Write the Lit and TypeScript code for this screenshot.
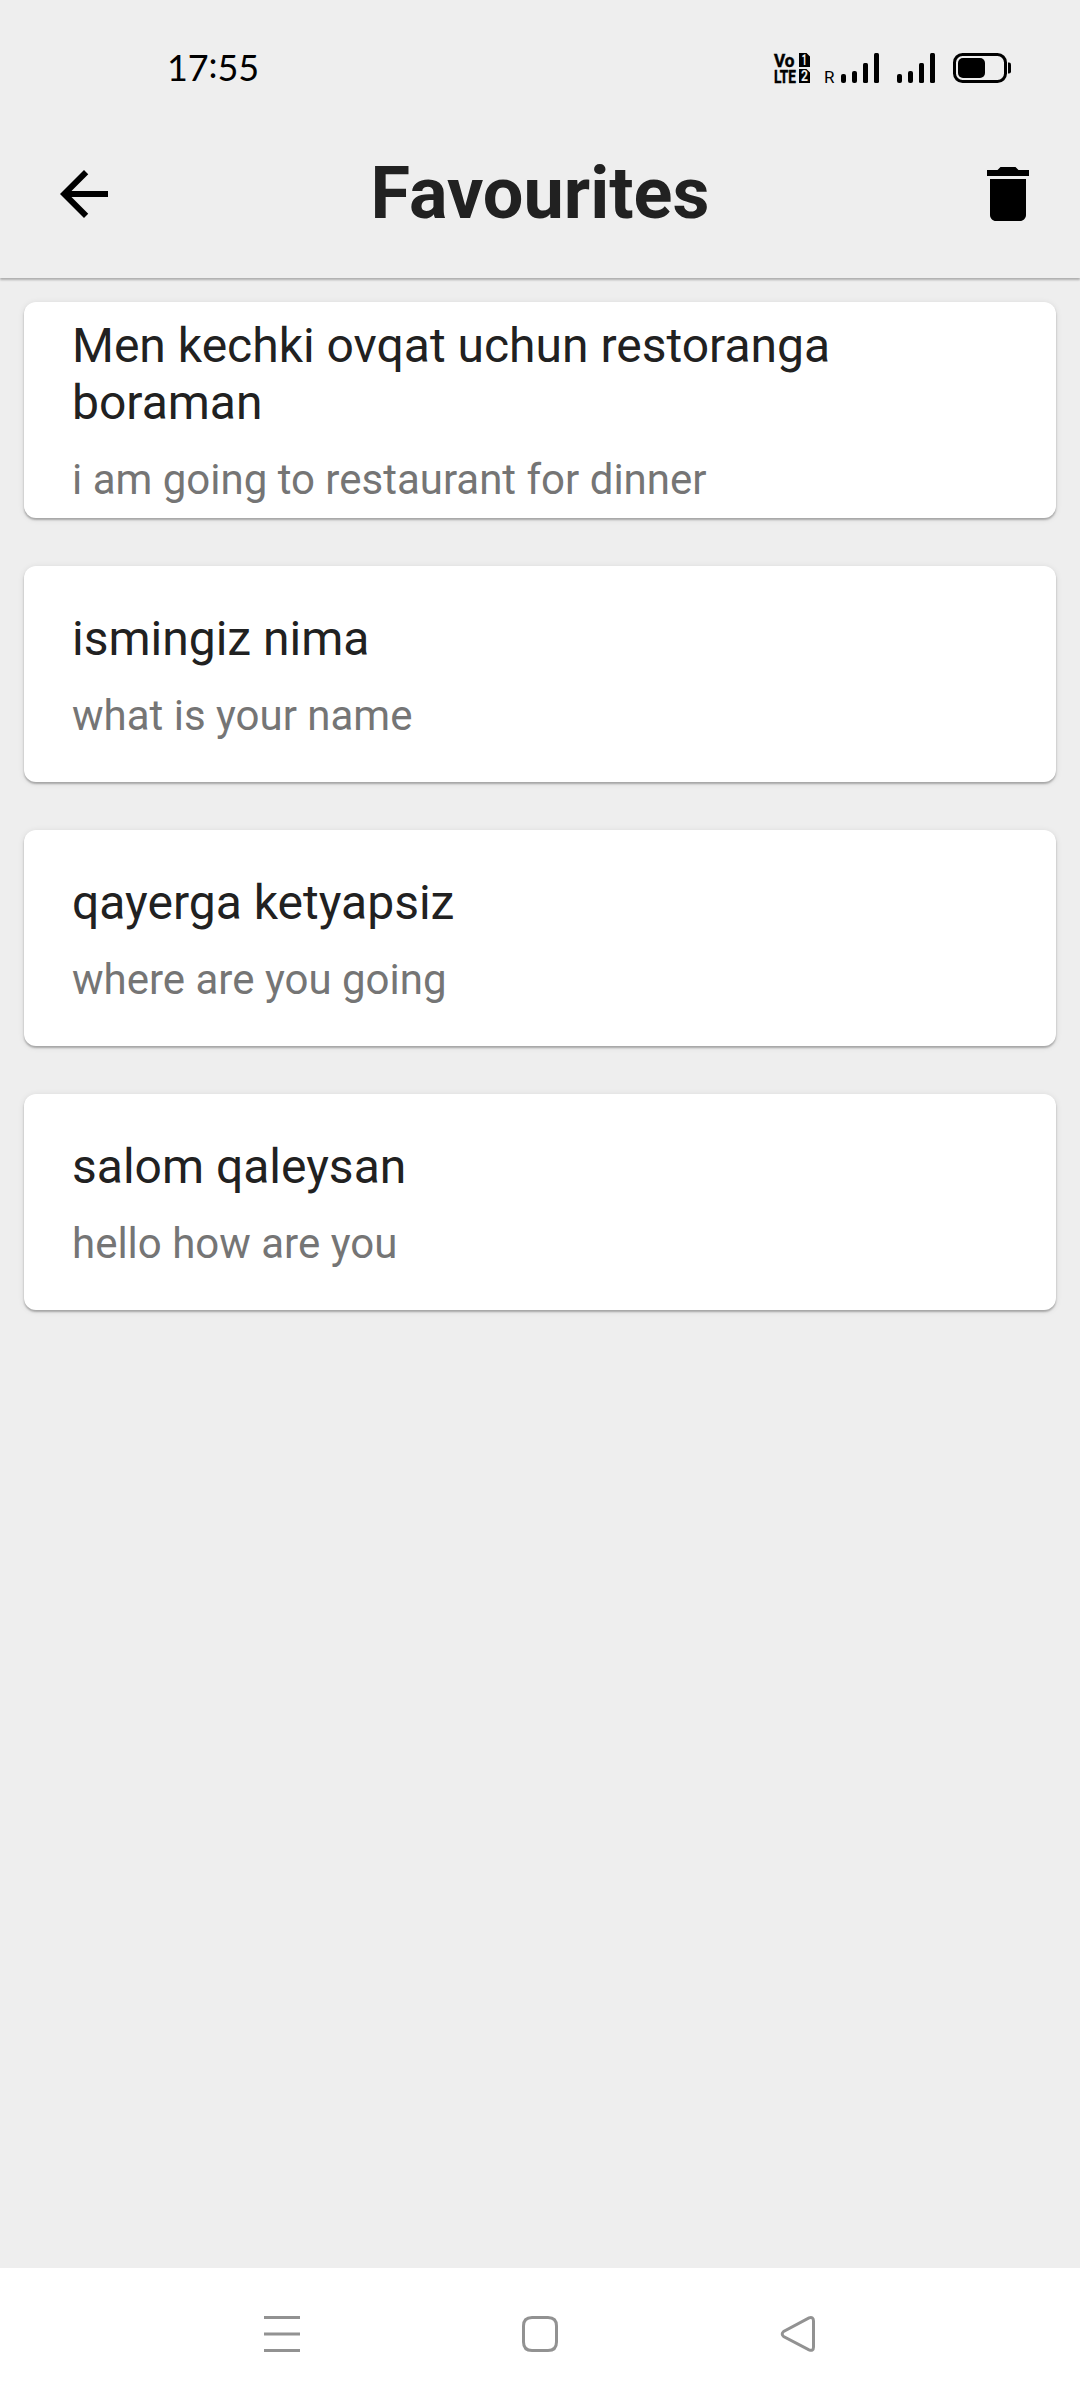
import { LitElement, html, css } from "lit";
import { customElement, property } from "lit/decorators.js";

interface Phrase {
  source: string;
  translation: string;
}

const PHRASES: Phrase[] = [
  { source: "Men kechki ovqat uchun restoranga boraman", translation: "i am going to restaurant for dinner" },
  { source: "ismingiz nima", translation: "what is your name" },
  { source: "qayerga ketyapsiz", translation: "where are you going" },
  { source: "salom qaleysan", translation: "hello how are you" },
];

@customElement("status-bar")
class StatusBar extends LitElement {
  static styles = css`
    :host {
      display: flex;
      justify-content: space-between;
      align-items: center;
      box-sizing: border-box;
      height: 110px;
      padding: 26px 68px 0 167px;
      color: #000;
    }
    .time {
      padding-bottom: 2px;
      font: 400 36px/36px Lato, sans-serif;
      letter-spacing: -0.1px;
    }
    .colon {
      position: relative;
      top: -3px;
    }
    .icons {
      display: flex;
      align-items: center;
    }
    .icons svg {
      display: block;
      overflow: visible;
    }
    .volte {
      margin-right: 14px;
    }
    .roaming {
      margin-right: 18px;
    }
    .signal {
      margin-right: 18px;
    }
    .label {
      font-family: Roboto, sans-serif;
      font-weight: 700;
      stroke: #000;
      stroke-width: 0.5px;
    }
    .sim {
      font-family: Roboto, sans-serif;
      font-weight: 700;
      fill: #eee;
    }
    .roam {
      font-family: Roboto, sans-serif;
    }
  `;

  render() {
    return html`
      <span class="time">17<span class="colon">:</span>55</span>
      <div class="icons">
        <svg class="volte" width="37" height="30" viewBox="0 0 37 30">
          <text class="label" x="1" y="14" font-size="19" textLength="20.5" lengthAdjust="spacingAndGlyphs">Vo</text>
          <text class="label" x="1" y="30" font-size="19" textLength="22" lengthAdjust="spacingAndGlyphs">LTE</text>
          <path d="M26 0h7.5l3.5 3.5V14H26zM26 16h7.5l3.5 3.5V30H26z" />
          <text class="sim" x="28.5" y="12" font-size="14" textLength="5.5" lengthAdjust="spacingAndGlyphs">1</text>
          <text class="sim" x="28" y="28" font-size="14" textLength="7" lengthAdjust="spacingAndGlyphs">2</text>
        </svg>
        <svg class="roaming" width="55" height="30" viewBox="0 0 55 30">
          <text class="roam" x="0" y="30" font-size="17">R</text>
          <rect x="17" y="21" width="5" height="9" rx="2" />
          <rect x="28" y="18" width="5" height="12" rx="2" />
          <rect x="39" y="10" width="5" height="20" rx="1.5" />
          <rect x="50" y="0" width="5" height="30" rx="1.5" />
        </svg>
        <svg class="signal" width="38" height="30" viewBox="0 0 38 30">
          <rect x="0" y="21" width="5" height="9" rx="2" />
          <rect x="11" y="18" width="5" height="12" rx="2" />
          <rect x="22" y="10" width="5" height="20" rx="1.5" />
          <rect x="33" y="0" width="5" height="30" rx="1.5" />
        </svg>
        <svg width="59" height="30" viewBox="0 0 59 30">
          <rect x="1.5" y="1.5" width="51" height="27" rx="8" fill="none" stroke="#000" stroke-width="3" />
          <rect x="5" y="5" width="27" height="20" rx="5" />
          <path d="M55 9.5h1a2 2 0 0 1 2 2v7a2 2 0 0 1-2 2h-1z" />
        </svg>
      </div>
    `;
  }
}

@customElement("phrase-card")
class PhraseCard extends LitElement {
  @property({ attribute: false }) phrase!: Phrase;

  static styles = css`
    :host {
      display: flex;
      flex-direction: column;
      justify-content: center;
      gap: 24px;
      box-sizing: border-box;
      height: 216px;
      padding: 1px 48px 0;
      border-radius: 12px;
      background: #fff;
      box-shadow: 0 2px 2px rgba(0, 0, 0, 0.26), 0 1px 6px rgba(0, 0, 0, 0.1);
    }
    .source {
      font-size: 48px;
      line-height: 57px;
      color: #212121;
    }
    .translation {
      font-size: 42px;
      line-height: 49px;
      color: #757575;
    }
  `;

  render() {
    return html`
      <div class="source">${this.phrase.source}</div>
      <div class="translation">${this.phrase.translation}</div>
    `;
  }
}

@customElement("app-root")
class AppRoot extends LitElement {
  static styles = css`
    :host {
      display: flex;
      flex-direction: column;
      width: 1080px;
      height: 2400px;
      background: #eee;
      font-family: Roboto, sans-serif;
    }
    .header {
      box-shadow: 0 2px 2px rgba(0, 0, 0, 0.27);
    }
    .app-bar {
      display: flex;
      align-items: center;
      justify-content: space-between;
      box-sizing: border-box;
      height: 168px;
      padding: 0 36px 0 48px;
    }
    .app-bar svg {
      display: block;
    }
    .title {
      margin: 0;
      padding-right: 12px;
      font-size: 72px;
      line-height: 84px;
      font-weight: 700;
      color: #212121;
    }
    .list {
      flex: 1;
      display: flex;
      flex-direction: column;
      gap: 48px;
      padding: 24px;
    }
    .nav {
      display: flex;
      align-items: center;
      justify-content: center;
      gap: 222px;
      height: 132px;
      background: #fff;
    }
  `;

  render() {
    return html`
      <div class="header">
        <status-bar></status-bar>
        <div class="app-bar">
          <svg width="72" height="72" viewBox="0 0 24 24">
            <path d="M20 11H7.83l5.59-5.59L12 4l-8 8 8 8 1.41-1.41L7.83 13H20v-2z" />
          </svg>
          <h1 class="title">Favourites</h1>
          <svg width="72" height="72" viewBox="0 0 24 24">
            <path d="M6 19c0 1.1.9 2 2 2h8c1.1 0 2-.9 2-2V7H6v12zM19 4h-3.5l-1-1h-5l-1 1H5v2h14V4z" />
          </svg>
        </div>
      </div>
      <div class="list">${PHRASES.map((p) => html`<phrase-card .phrase=${p}></phrase-card>`)}</div>
      <div class="nav">
        <svg width="36" height="36" viewBox="0 0 36 36" fill="none" stroke="#929292" stroke-width="3">
          <path d="M0 1.5h36M0 18h36M0 34.5h36" />
        </svg>
        <svg width="36" height="36" viewBox="0 0 36 36" fill="none" stroke="#929292" stroke-width="3">
          <path d="M10 1.5H26Q34.5 1.5 34.5 10V26Q34.5 34.5 26 34.5H10Q1.5 34.5 1.5 26V10Q1.5 1.5 10 1.5Z" />
        </svg>
        <svg width="36" height="36" viewBox="0 0 36 36" fill="none" stroke="#929292" stroke-width="3">
          <path d="M29 1.9Q33.5 0.5 33.5 5V31Q33.5 35.5 29 33.8L3.6 20.5Q0.8 18 3.6 15.5Z" />
        </svg>
      </div>
    `;
  }
}
